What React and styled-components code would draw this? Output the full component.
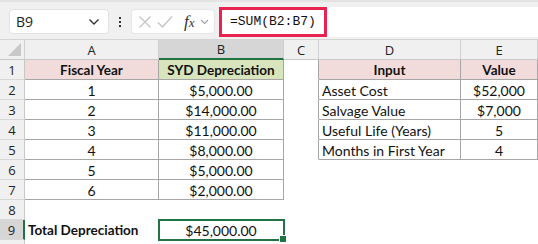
import styled, { createGlobalStyle } from "styled-components";

const GlobalStyle = createGlobalStyle`
  html, body {
    margin: 0;
    padding: 0;
    background: #ffffff;
  }
  body {
    width: 538px;
    height: 244px;
    overflow: hidden;
    font-family: "Open Sans", "Liberation Sans", sans-serif;
  }
`;

const COLS = ["A", "B", "C", "D", "E"];

const rows = [
  { n: 1, cells: ["Fiscal Year", "SYD Depreciation", "", "Input", "Value"] },
  { n: 2, cells: ["1", "$5,000.00", "", "Asset Cost", "$52,000"] },
  { n: 3, cells: ["2", "$14,000.00", "", "Salvage Value", "$7,000"] },
  { n: 4, cells: ["3", "$11,000.00", "", "Useful Life (Years)", "5"] },
  { n: 5, cells: ["4", "$8,000.00", "", "Months in First Year", "4"] },
  { n: 6, cells: ["5", "$5,000.00", "", "", ""] },
  { n: 7, cells: ["6", "$2,000.00", "", "", ""] },
  { n: 8, cells: ["", "", "", "", ""] },
  { n: 9, cells: ["Total Depreciation", "$45,000.00", "", "", ""] },
];

function cellProps(r, c) {
  const inLeft = r <= 7 && c <= 1;
  const inRight = r <= 5 && c >= 3;
  const props = { bordered: inLeft || inRight, align: "center" };
  if (r === 1 && (c === 0 || c === 3 || c === 4)) props.fill = "#f2dcdb";
  if (r === 1 && c === 1) props.fill = "#d8e4bc";
  if (r === 1 || r === 9) props.bold = r === 1 || c === 0;
  if (c === 2 && r <= 5) props.edge = true;
  if (c === 3 && r > 1) props.align = "left";
  if (r === 9 && c === 0) props.align = "left";
  if (r === 9 && c === 1) props.selected = true;
  return props;
}

export default function App() {
  return (
    <Page>
      <GlobalStyle />
      <Toolbar>
        <NameBox>
          <span>B9</span>
          <Chevron width="12" height="8" viewBox="0 0 12 8">
            <path d="M1.5 1.5 L6 6 L10.5 1.5" />
          </Chevron>
        </NameBox>
        <Dots>
          <i />
          <i />
          <i />
        </Dots>
        <FxBox>
          <svg width="14" height="14" viewBox="0 0 14 14">
            <path d="M1.5 1.5 L12.5 12.5 M12.5 1.5 L1.5 12.5" stroke="#c4c4c4" strokeWidth="1.3" fill="none" />
          </svg>
          <svg width="16" height="14" viewBox="0 0 16 14">
            <path d="M1 7.5 L5.5 12 L15 1.5" stroke="#c4c4c4" strokeWidth="1.3" fill="none" />
          </svg>
          <Fx>
            f<sub>x</sub>
          </Fx>
          <SmallChevron width="9" height="6" viewBox="0 0 9 6">
            <path d="M1 1 L4.5 4.5 L8 1" />
          </SmallChevron>
        </FxBox>
        <FormulaBox>
          <Highlight>=SUM(B2:B7)</Highlight>
        </FormulaBox>
      </Toolbar>
      <Sheet>
        <Corner>
          <svg width="13" height="13" viewBox="0 0 13 13">
            <path d="M13 0 L13 13 L0 13 Z" fill="#c8c8c8" />
          </svg>
        </Corner>
        {COLS.map((c) => (
          <ColHead key={c} active={c === "B"}>
            {c}
          </ColHead>
        ))}
        {rows.map((row) => (
          <Row key={row.n}>
            <RowHead active={row.n === 9}>{row.n}</RowHead>
            {row.cells.map((text, c) => {
              const p = cellProps(row.n, c);
              return (
                <Cell
                  key={c}
                  $bordered={p.bordered}
                  $fill={p.fill}
                  $bold={p.bold}
                  $edge={p.edge}
                  $align={p.align}
                  $selected={p.selected}
                >
                  {text}
                  {p.selected && <Handle />}
                </Cell>
              );
            })}
          </Row>
        ))}
        <Row>
          <RowHead />
          {COLS.map((c) => (
            <Cell key={c} />
          ))}
        </Row>
      </Sheet>
    </Page>
  );
}

const Page = styled.div`
  width: 538px;
  height: 244px;
  overflow: hidden;
  background: #ffffff;
`;

const Toolbar = styled.div`
  height: 40px;
  box-sizing: border-box;
  background: #f0f0f0;
  border-top: 2px solid #e3e3e3;
  border-bottom: 1px solid #d4d4d4;
  display: flex;
  align-items: center;
  padding: 2px 0 0 9px;
`;

const NameBox = styled.div`
  width: 100px;
  height: 25px;
  box-sizing: border-box;
  background: #ffffff;
  border: 1px solid #e2e2e2;
  border-radius: 4px;
  display: flex;
  align-items: center;
  justify-content: space-between;
  padding: 0 8px 0 6px;
  font-family: "Open Sans", "Liberation Sans", sans-serif;
  font-size: 14px;
  color: #222222;
`;

const Chevron = styled.svg`
  fill: none;
  stroke: #333333;
  stroke-width: 1.4;
`;

const SmallChevron = styled.svg`
  fill: none;
  stroke: #a0a0a0;
  stroke-width: 1.1;
`;

const Dots = styled.div`
  width: 22px;
  display: flex;
  flex-direction: column;
  align-items: center;
  gap: 2px;
  i {
    width: 2px;
    height: 2px;
    background: #333333;
  }
`;

const FxBox = styled.div`
  width: 84px;
  height: 25px;
  box-sizing: border-box;
  background: #ffffff;
  border: 1px solid #e6e6e6;
  border-radius: 4px;
  display: flex;
  align-items: center;
  gap: 5px;
  padding: 0 4px 0 6px;
`;

const Fx = styled.span`
  font-family: "Liberation Serif", serif;
  font-style: italic;
  font-size: 17px;
  color: #333333;
  margin-left: 6px;
  sub {
    font-size: 13px;
    vertical-align: 0;
  }
`;

const FormulaBox = styled.div`
  flex: 1;
  height: 30px;
  margin-left: 4px;
  box-sizing: border-box;
  background: #ffffff;
  border-radius: 4px 0 0 4px;
  display: flex;
  align-items: center;
`;

const Highlight = styled.div`
  height: 30px;
  width: 108px;
  box-sizing: border-box;
  border: 3px solid #e8234f;
  display: flex;
  align-items: center;
  padding-left: 8px;
  font-family: "Liberation Mono", monospace;
  font-size: 13px;
  color: #111111;
`;

const Sheet = styled.div`
  display: grid;
  grid-template-columns: 25px 134px 125px 35px 142px 77px;
  grid-auto-rows: 20px;
  grid-template-rows: 20px;
`;

const Row = styled.div`
  display: contents;
`;

const Corner = styled.div`
  background: #f0f0f0;
  border-right: 1px solid #d0d0d0;
  border-bottom: 1px solid #c8c8c8;
  box-sizing: border-box;
  display: flex;
  align-items: flex-end;
  justify-content: flex-end;
  padding: 0 3px 3px 0;
`;

const ColHead = styled.div`
  box-sizing: border-box;
  background: ${(p) => (p.active ? "#d6d6d6" : "#f0f0f0")};
  border-right: 1px solid #d0d0d0;
  border-bottom: ${(p) => (p.active ? "2px solid #217346" : "1px solid #c8c8c8")};
  display: flex;
  align-items: center;
  justify-content: center;
  font-family: "Open Sans", "Liberation Sans", sans-serif;
  font-size: 13px;
  color: #222222;
`;

const RowHead = styled.div`
  box-sizing: border-box;
  background: ${(p) => (p.active ? "#d6d6d6" : "#f0f0f0")};
  border-right: ${(p) => (p.active ? "2px solid #217346" : "1px solid #c8c8c8")};
  border-bottom: 1px solid #d8d8d8;
  display: flex;
  align-items: center;
  justify-content: center;
  font-family: "Open Sans", "Liberation Sans", sans-serif;
  font-size: 13px;
  color: #222222;
`;

const Cell = styled.div`
  position: relative;
  box-sizing: border-box;
  background: ${(p) => p.$fill || "#ffffff"};
  border-right: 1px solid
    ${(p) => (p.$bordered || p.$edge ? "#a6a6a6" : "transparent")};
  border-bottom: 1px solid ${(p) => (p.$bordered ? "#a6a6a6" : "transparent")};
  ${(p) => p.$selected && "outline: 2px solid #217346; outline-offset: -1px; z-index: 1;"}
  display: flex;
  align-items: center;
  justify-content: ${(p) => (p.$align === "left" ? "flex-start" : "center")};
  padding: 1px 3px 0;
  font-family: "Lato", "Liberation Sans", sans-serif;
  font-size: ${(p) => (p.$bold ? "13.5px" : "14px")};
  font-weight: ${(p) => (p.$bold ? 700 : 400)};
  color: #111111;
  white-space: nowrap;
  overflow: visible;
`;

const Handle = styled.span`
  position: absolute;
  right: -4px;
  bottom: -4px;
  width: 6px;
  height: 6px;
  background: #217346;
  border: 1px solid #ffffff;
`;
